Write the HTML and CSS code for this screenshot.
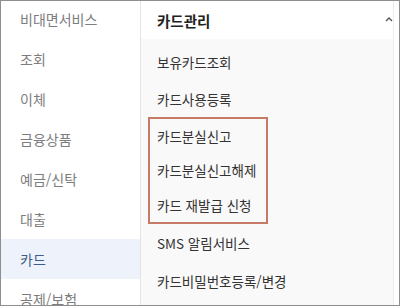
FILE: index.html
```html
<!DOCTYPE html>
<html lang="ko">
<head>
<meta charset="utf-8">
<link rel="stylesheet" href="styles.css">
</head>
<body>
<div class="frame">
  <ul class="side">
    <li class="side-item">비대면서비스</li>
    <li class="side-item">조회</li>
    <li class="side-item">이체</li>
    <li class="side-item">금융상품</li>
    <li class="side-item">예금/신탁</li>
    <li class="side-item">대출</li>
    <li class="side-item active">카드</li>
    <li class="side-item">공제/보험</li>
  </ul>
  <div class="panel">
    <div class="panel-head">
      <span class="panel-title">카드관리</span>
      <svg class="chev" width="8" height="6" viewBox="0 0 8 6"><path d="M1 5 L4 2 L7 5" fill="none" stroke="#555" stroke-width="1.4"/></svg>
    </div>
    <div class="panel-body">
      <div class="sub">보유카드조회</div>
      <div class="sub">카드사용등록</div>
      <div class="group">
        <div class="sub in">카드분실신고</div>
        <div class="sub in">카드분실신고해제</div>
        <div class="sub in">카드 재발급 신청</div>
      </div>
      <div class="sub after">SMS 알림서비스</div>
      <div class="sub after">카드비밀번호등록/변경</div>
    </div>
  </div>
</div>
</body>
</html>
```
FILE: styles.css
```css
html, body {
  margin: 0;
  padding: 0;
  background: #fff;
}
body {
  font-family: "Noto Sans CJK KR", "Noto Sans", sans-serif;
}
.frame {
  width: 400px;
  height: 306px;
  box-sizing: border-box;
  border: 1px solid #8e8e8e;
  overflow: hidden;
  display: flex;
  background: #fff;
}
.side {
  list-style: none;
  margin: -2px 0 0 0;
  padding: 0;
  width: 139px;
  flex: none;
  border-right: 1px solid #e4e4e4;
}
.side-item {
  height: 40px;
  display: flex;
  align-items: center;
  padding-left: 19px;
  font-size: 14px;
  color: #7d7d7d;
}
.side-item.active {
  background: #eef3fb;
  color: #3f5c8a;
}
.panel {
  flex: 1;
  margin-right: 5px;
  border-right: 1px solid #ececec;
  display: flex;
  flex-direction: column;
}
.panel-head {
  height: 38px;
  flex: none;
  display: flex;
  align-items: center;
  justify-content: space-between;
  padding: 0 0 0 16px;
  background: #fff;
}
.panel-title {
  font-size: 14.5px;
  font-weight: 700;
  color: #222;
}
.chev {
  margin-top: -2px;
}
.panel-body {
  flex: 1;
  background: #f9f9f9;
  padding-top: 5px;
  display: flex;
  flex-direction: column;
}
.sub {
  height: 36.5px;
  flex: none;
  display: flex;
  align-items: center;
  padding-left: 16px;
  font-size: 13.5px;
  color: #333;
}
.group {
  margin-left: 7px;
  width: 120px;
  box-sizing: border-box;
  border: 2px solid #c77a66;
  flex: none;
}
.sub.in {
  height: 34.33px;
  padding-left: 7px;
  white-space: nowrap;
}
.sub.after {
  height: 38px;
}
```
